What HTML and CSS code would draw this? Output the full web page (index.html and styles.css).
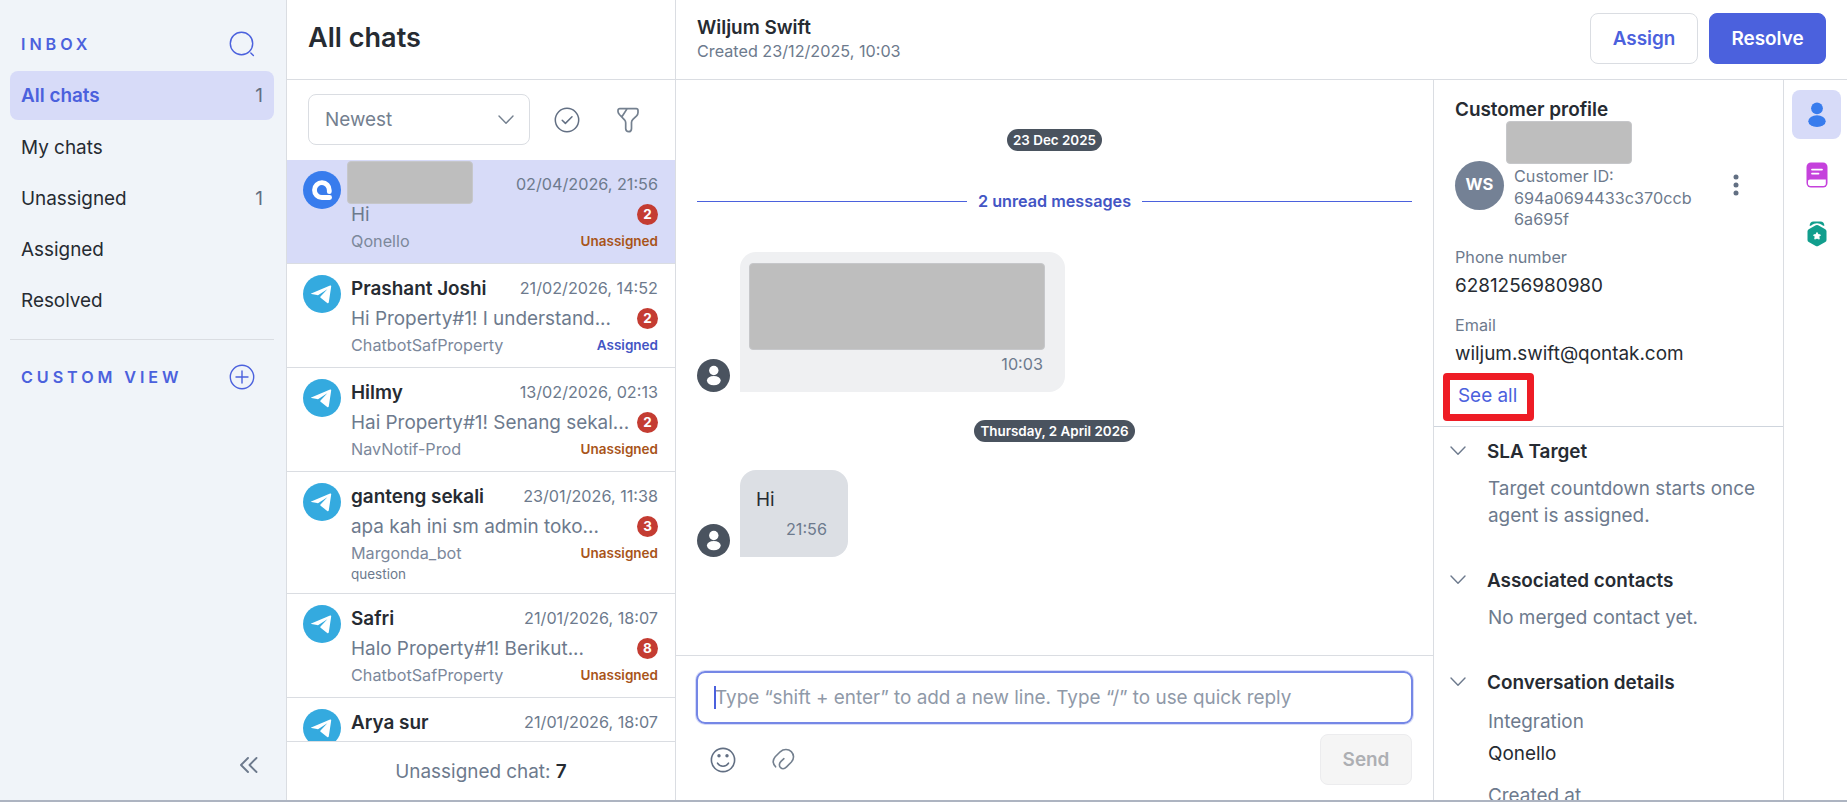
FILE: index.html
```html
<!DOCTYPE html>
<html lang="en">
<head>
    <meta charset="UTF-8">
    <meta name="viewport" content="width=device-width, initial-scale=1.0">
    <title>All chats</title>
    <link rel="stylesheet" href="styles.css">
</head>
<body>
    <!-- shared icons -->
    <svg width="0" height="0" class="sprite">
        <symbol id="telegram" viewBox="0 0 38 38">
            <circle cx="19" cy="19" r="19" fill="#34aadf"/>
            <path d="M8.2 18.6 27.1 10.6c.7-.3 1.2.1 1.1.9l-2.4 15.7c-.2 1-.9 1.2-1.6.7l-6.600-5.1c-.5-.4-.5-.9-.1-1.3l6.8-7.2-8.9 5.6c-.5.3-.9.3-1.4.2l-5.600-1.2c-.7-.2-.7-.1-.2-.3z" fill="#fff"/>
        </symbol>
        <symbol id="chevron" viewBox="0 0 16 10">
            <path d="M1 1l7 7.300 7-7.300" fill="none" stroke="currentColor" stroke-width="1.400" stroke-linecap="round" stroke-linejoin="round"/>
        </symbol>
        <symbol id="person" viewBox="0 0 33 33">
            <circle cx="16.500" cy="16.500" r="16.500" fill="#4a535f"/>
            <circle cx="16.800" cy="11.500" r="4.700" fill="#fff"/>
            <ellipse cx="16.800" cy="21.600" rx="6.900" ry="4.700" fill="#fff"/>
        </symbol>
    </svg>

    <div class="app">
        <aside class="sidebar">
            <div class="side-title">
                <span>INBOX</span>
                <svg width="26" height="26" viewBox="0 0 26 26" fill="none" stroke="#4b61dd" stroke-width="1.400" stroke-linecap="round"><circle cx="12.500" cy="12.500" r="11.200"/><path d="M21.800 22l2.600 2.600"/></svg>
            </div>
            <nav class="menu">
                <a class="menu-item active"><span>All chats</span><span class="count">1</span></a>
                <a class="menu-item"><span>My chats</span></a>
                <a class="menu-item"><span>Unassigned</span><span class="count">1</span></a>
                <a class="menu-item"><span>Assigned</span></a>
                <a class="menu-item"><span>Resolved</span></a>
            </nav>
            <div class="side-title custom">
                <span>CUSTOM VIEW</span>
                <svg width="26" height="26" viewBox="0 0 26 26" fill="none" stroke="#4b61dd" stroke-width="1.400" stroke-linecap="round"><circle cx="13" cy="13" r="11.700"/><path d="M13 7v12M7 13h12"/></svg>
            </div>
            <svg class="collapse" width="18" height="16" viewBox="0 0 18 16" fill="none" stroke="#6d7a8d" stroke-width="1.900" stroke-linecap="round" stroke-linejoin="round"><path d="M8 1L1 8l7 7M16.500 1l-7 7 7 7"/></svg>
        </aside>

        <section class="chats">
            <header class="chats-head">All chats</header>
            <div class="filters">
                <div class="select"><span>Newest</span><svg width="16" height="10"><use href="#chevron"/></svg></div>
                <svg class="check" width="26" height="26" viewBox="0 0 26 26" fill="none" stroke="#626f83" stroke-width="1.500" stroke-linecap="round" stroke-linejoin="round"><circle cx="13" cy="13" r="11.700"/><path d="M8.200 13.200l3.200 3.200 6.600-6.600"/></svg>
                <svg class="funnel" width="22" height="26" viewBox="0 0 22 26" fill="none" stroke="#74808f" stroke-width="1.700" stroke-linecap="round" stroke-linejoin="round"><path d="M2.800 1.700h16.400c1.100 0 1.800.7 1.800 1.700v2.200c0 1.300-.4 2.300-1.400 3.300l-3.700 3.500c-1.100 1-1.400 1.800-1.400 3.200v5.800c0 2.100-1.100 3.300-2.800 3.300s-3-1.200-3-3.300v-5.600c0-1.300-.3-2-1.200-3L2.400 7.500C1.500 6.500 1 5.700 1 4.600V3.400c0-1 .7-1.700 1.800-1.700zM10 1.900L4.900 9.700"/></svg>
            </div>
            <div class="chat-list">
                <article class="chat selected">
                    <svg class="logo" width="38" height="38" viewBox="0 0 38 38"><circle cx="19" cy="19" r="19" fill="#387ced"/><path d="M26.600 26.500H18.800a7.400 7.400 0 1 1 7.500-7.200v1.400" fill="none" stroke="#fff" stroke-width="4.800" stroke-linecap="round" stroke-linejoin="round"/></svg>
                    <div class="chat-body">
                        <div class="row top"><span></span><time>02/04/2026, 21:56</time></div>
                        <div class="row mid"><span class="text">Hi</span><span class="badge">2</span></div>
                        <div class="row low"><span>Qonello</span><b class="unassigned">Unassigned</b></div>
                    </div>
                    <i class="mask name-mask"></i>
                </article>
                <article class="chat">
                    <svg class="logo" width="38" height="38"><use href="#telegram"/></svg>
                    <div class="chat-body">
                        <div class="row top"><strong>Prashant Joshi</strong><time>21/02/2026, 14:52</time></div>
                        <div class="row mid"><span class="text">Hi Property#1! I understand...</span><span class="badge">2</span></div>
                        <div class="row low"><span>ChatbotSafProperty</span><b class="assigned">Assigned</b></div>
                    </div>
                </article>
                <article class="chat">
                    <svg class="logo" width="38" height="38"><use href="#telegram"/></svg>
                    <div class="chat-body">
                        <div class="row top"><strong>Hilmy</strong><time>13/02/2026, 02:13</time></div>
                        <div class="row mid"><span class="text">Hai Property#1! Senang sekal...</span><span class="badge">2</span></div>
                        <div class="row low"><span>NavNotif-Prod</span><b class="unassigned">Unassigned</b></div>
                    </div>
                </article>
                <article class="chat">
                    <svg class="logo" width="38" height="38"><use href="#telegram"/></svg>
                    <div class="chat-body">
                        <div class="row top"><strong>ganteng sekali</strong><time>23/01/2026, 11:38</time></div>
                        <div class="row mid"><span class="text">apa kah ini sm admin toko...</span><span class="badge">3</span></div>
                        <div class="row low"><span>Margonda_bot</span><b class="unassigned">Unassigned</b></div>
                        <div class="tag">question</div>
                    </div>
                </article>
                <article class="chat">
                    <svg class="logo" width="38" height="38"><use href="#telegram"/></svg>
                    <div class="chat-body">
                        <div class="row top"><strong>Safri</strong><time>21/01/2026, 18:07</time></div>
                        <div class="row mid"><span class="text">Halo Property#1! Berikut...</span><span class="badge">8</span></div>
                        <div class="row low"><span>ChatbotSafProperty</span><b class="unassigned">Unassigned</b></div>
                    </div>
                </article>
                <article class="chat">
                    <svg class="logo" width="38" height="38"><use href="#telegram"/></svg>
                    <div class="chat-body">
                        <div class="row top"><strong>Arya sur</strong><time>21/01/2026, 18:07</time></div>
                    </div>
                </article>
            </div>
            <footer class="chats-foot">Unassigned chat: <strong>7</strong></footer>
        </section>

        <main class="main">
            <header class="room-head">
                <div>
                    <div class="room-name">Wiljum Swift</div>
                    <div class="room-date">Created 23/12/2025, 10:03</div>
                </div>
                <div class="actions">
                    <button class="btn assign">Assign</button>
                    <button class="btn resolve">Resolve</button>
                </div>
            </header>
            <div class="content">
                <section class="room">
                    <div class="messages">
                        <div class="day">23 Dec 2025</div>
                        <div class="unread">2 unread messages</div>
                        <div class="message first">
                            <svg width="33" height="33"><use href="#person"/></svg>
                            <div class="bubble old">
                                <i class="mask text-mask"></i>
                                <time>10:03</time>
                            </div>
                        </div>
                        <div class="day">Thursday, 2 April 2026</div>
                        <div class="message">
                            <svg width="33" height="33"><use href="#person"/></svg>
                            <div class="bubble new">
                                <p>Hi</p>
                                <time>21:56</time>
                            </div>
                        </div>
                    </div>
                    <div class="composer">
                        <div class="input"><i class="caret"></i>Type “shift + enter” to add a new line. Type “/” to use quick reply</div>
                        <div class="tools">
                            <svg class="emoji" width="26" height="26" viewBox="0 0 26 26" fill="none" stroke="#626f83" stroke-width="1.600" stroke-linecap="round"><circle cx="13" cy="13" r="11.600"/><circle cx="9" cy="8.800" r="1.700" fill="#626f83" stroke="none"/><circle cx="17" cy="8.800" r="1.700" fill="#626f83" stroke="none"/><path d="M7.500 16.200c2.300 4 8.700 4 11 0"/></svg>
                            <svg class="clip" width="24" height="24" viewBox="0 0 24 24" fill="none" stroke="#74808f" stroke-width="1.600" stroke-linecap="round" stroke-linejoin="round"><path d="M4.600 18.800C2 16 1.500 12 4.200 8.700L9.200 3.800C12.500.8 17.500.9 20.300 3.600c3 3.100 2.900 7.400.1 10.400l-4.800 4.900c-2 2-4.400 2.300-6 .7-1.800-1.700-1.500-4.300.4-6.200l2.900-2.700"/></svg>
                            <button class="btn send">Send</button>
                        </div>
                    </div>
                </section>

                <aside class="profile">
                    <div class="customer">
                        <h3>Customer profile</h3>
                        <div class="identity">
                            <div class="avatar">WS</div>
                            <div class="customer-id">Customer ID: 694a0694433c370ccb<br>6a695f</div>
                            <svg class="dots" width="6" height="22" viewBox="0 0 6 22" fill="#626f83"><circle cx="3" cy="3" r="2.500"/><circle cx="3" cy="11" r="2.500"/><circle cx="3" cy="19" r="2.500"/></svg>
                            <i class="mask profile-mask"></i>
                        </div>
                        <div class="label">Phone number</div>
                        <div class="value">6281256980980</div>
                        <div class="label">Email</div>
                        <div class="value">wiljum.swift@qontak.com</div>
                        <a class="see-all">See all</a>
                    </div>
                    <div class="panel">
                        <h4><svg width="16" height="10"><use href="#chevron"/></svg>SLA Target</h4>
                        <p>Target countdown starts once agent is assigned.</p>
                    </div>
                    <div class="panel">
                        <h4><svg width="16" height="10"><use href="#chevron"/></svg>Associated contacts</h4>
                        <p>No merged contact yet.</p>
                    </div>
                    <div class="panel">
                        <h4><svg width="16" height="10"><use href="#chevron"/></svg>Conversation details</h4>
                        <p>Integration</p>
                        <p class="detail">Qonello</p>
                        <p>Created at</p>
                    </div>
                </aside>

                <nav class="rail">
                    <a class="rail-item active"><svg width="18" height="26" viewBox="0 0 18 26" fill="#387ced"><circle cx="9" cy="6.300" r="5.900"/><ellipse cx="9" cy="19.200" rx="8.700" ry="5.900"/></svg></a>
                    <a class="rail-item"><svg width="22" height="26" viewBox="0 0 22 26"><rect x=".5" y=".5" width="21" height="25" rx="4.500" fill="#c541dc"/><path d="M2 19.300c0-1.100.9-1.800 1.900-1.800h15.900v4.200c0 1.300-.9 2.200-2.200 2.200H4.300C3 23.900 2 23 2 21.700z" fill="#fff"/><path d="M6 7.600h10M6 11.600h6.500" stroke="#fff" stroke-width="1.800" stroke-linecap="round"/></svg></a>
                    <a class="rail-item"><svg width="20" height="26" viewBox="0 0 20 26"><path d="M2.600 4.800C2.900 1.800 4.200.6 6.500.6h7c2.300 0 3.600 1.200 3.900 4.200z" fill="#119e8d"/><path d="M3 6.300l1.800-2.200Q7 2.300 10 2.300t5.200 1.800L17 6.300z" fill="#fff"/><path d="M8.800 4.200q1.200-.6 2.400 0l7.100 4q1.200.8 1.200 2.100v8.600q0 1.300-1.200 2l-7.100 4q-1.200.7-2.400 0l-7.100-4q-1.200-.7-1.200-2v-8.600q0-1.300 1.200-2.100z" fill="#119e8d"/><path d="M10 11.500l1.200 2 2.300.5-1.600 1.700.3 2.400L10 17.100l-2.200 1 .3-2.400L6.500 14l2.300-.5z" fill="#fff" stroke="#fff" stroke-linejoin="round"/></svg></a>
                </nav>
            </div>
        </main>
    </div>
</body>
</html>
```
FILE: styles.css
```css
* {
    box-sizing: border-box;
}
body {
    margin: 0;
    font-family: Inter, "Liberation Sans", sans-serif;
    font-size: 18.9px;
    line-height: 27px;
    color: #262b32;
    background: #fff;
}
h3, h4, p {
    margin: 0;
    font-size: 18.9px;
}
svg {
    display: block;
    flex-shrink: 0;
}
strong, h3, h4 {
    font-weight: 600;
}
.sprite {
    position: absolute;
}
.app {
    display: flex;
    height: 802px;
    overflow: hidden;
    border-bottom: 2px solid #adb4c1;
}

/* sidebar */
.sidebar {
    width: 287px;
    flex-shrink: 0;
    display: flex;
    flex-direction: column;
    padding: 31px 12px 27px 10px;
    background: #f0f4f9;
    border-right: 1px solid #dadde2;
}
.side-title {
    display: flex;
    align-items: center;
    justify-content: space-between;
    height: 26px;
    padding: 0 19px 0 11px;
    font-size: 16.2px;
    font-weight: 600;
    letter-spacing: 3.9px;
    color: #4b61dd;
}
.menu {
    display: flex;
    flex-direction: column;
    gap: 2px;
    margin-top: 14px;
    padding-bottom: 14px;
    border-bottom: 1px solid #dadde2;
}
.menu-item {
    display: flex;
    align-items: center;
    justify-content: space-between;
    height: 49px;
    padding: 0 11px;
    border-radius: 8px;
}
.menu-item.active {
    margin-bottom: 1px;
    background: #d7dbf8;
    color: #4b61dd;
    font-weight: 600;
}
.count {
    color: #626f83;
    font-weight: 400;
}
.custom {
    margin-top: 24px;
}
.collapse {
    margin: auto 16px 0 auto;
}

/* chat list */
.chats {
    width: 389px;
    flex-shrink: 0;
    display: flex;
    flex-direction: column;
    border-right: 1px solid #dadde2;
}
.chats-head {
    height: 80px;
    padding: 24px 21px 0;
    font-size: 27.1px;
    font-weight: 600;
    border-bottom: 1px solid #dadde2;
}
.filters {
    display: flex;
    align-items: center;
    height: 80px;
    padding: 0 21px 1px;
    color: #74808f;
}
.select {
    display: flex;
    align-items: center;
    justify-content: space-between;
    width: 222px;
    height: 51px;
    padding: 0 15px 0 16px;
    border: 1px solid #dadde2;
    border-radius: 8px;
}
.check {
    margin-left: 24px;
}
.funnel {
    margin-left: 37px;
}
.chat-list {
    flex: 1;
    min-height: 0;
    overflow: hidden;
}
.chat {
    position: relative;
    display: flex;
    gap: 10px;
    min-height: 104px;
    padding: 10px 17px 9px 16px;
    border-bottom: 1px solid #dadde2;
}
.chat.selected {
    background: #d7dbf8;
}
.logo {
    margin-top: 1px;
}
.chat-body {
    flex: 1;
    color: #6d7a8d;
}
.chat-body strong {
    color: #262b32;
}
.row {
    display: flex;
    align-items: center;
    justify-content: space-between;
}
.top {
    height: 29px;
}
.mid {
    height: 30px;
}
.low {
    height: 25px;
    font-size: 16.2px;
    color: #7c889b;
}
time, .room-date, .label, .customer-id {
    font-size: 16.2px;
    color: #6d7a8d;
}
.badge {
    width: 21px;
    height: 21px;
    border-radius: 50%;
    background: #c43c32;
    color: #fff;
    font-size: 13.5px;
    font-weight: 700;
    line-height: 21px;
    text-align: center;
}
.low b {
    font-size: 13.5px;
    font-weight: 600;
}
.unassigned {
    color: #a8541a;
}
.assigned {
    color: #4355c4;
}
.tag {
    height: 18px;
    font-size: 13.5px;
    line-height: 17px;
}
.chats-foot {
    height: 59px;
    border-top: 1px solid #dadde2;
    line-height: 59px;
    text-align: center;
    color: #6d7a8d;
}
.chats-foot strong {
    color: #262b32;
}

/* areas blanked out for privacy */
.mask {
    display: block;
    background: #bebebe;
    border: 1px solid #c6c7ca;
    border-radius: 4px;
}
.name-mask {
    position: absolute;
    left: 60px;
    top: 1px;
    width: 126px;
    height: 43px;
}

/* room */
.main {
    flex: 1;
    display: flex;
    flex-direction: column;
}
.room-head {
    display: flex;
    justify-content: space-between;
    height: 80px;
    padding: 13px 21px 0;
    border-bottom: 1px solid #dadde2;
}
.room-name {
    font-weight: 600;
    line-height: 29px;
}
.room-date {
    line-height: 19px;
}
.actions {
    display: flex;
    gap: 11px;
}
.btn {
    height: 51px;
    padding: 0;
    border: 1px solid #dadde2;
    border-radius: 8px;
    background: #fff;
    font: 600 18.9px Inter, "Liberation Sans", sans-serif;
}
.assign {
    width: 108px;
    color: #4b61dd;
}
.resolve {
    width: 117px;
    border-color: #4b61dd;
    background: #4b61dd;
    color: #fff;
}
.content {
    flex: 1;
    min-height: 0;
    display: flex;
}
.room {
    flex: 1;
    display: flex;
    flex-direction: column;
}
.messages {
    flex: 1;
    padding: 49px 21px 0;
}
.day {
    width: fit-content;
    height: 22px;
    margin: 0 auto;
    padding: 0 6px;
    border-radius: 11px;
    background: #4a535f;
    color: #fff;
    font-size: 13.4px;
    font-weight: 600;
    line-height: 22px;
}
.unread {
    display: flex;
    align-items: center;
    gap: 11px;
    margin-top: 37px;
    color: #4355c4;
    font-size: 16.2px;
    font-weight: 600;
}
.unread::before, .unread::after {
    content: "";
    flex: 1;
    height: 1px;
    background: #4b61dd;
}
.message {
    display: flex;
    align-items: flex-end;
    gap: 10px;
    margin-top: 28px;
}
.message.first {
    margin: 37px 0 28px;
}
.bubble {
    border-radius: 16px 16px 16px 0;
    text-align: right;
}
.bubble time {
    display: block;
    line-height: 20px;
}
.old {
    width: 325px;
    height: 140px;
    padding: 11px 22px 0 9px;
    background: #eff0f2;
}
.text-mask {
    width: 296px;
    height: 87px;
    margin-bottom: 4px;
}
.new {
    width: 108px;
    height: 87px;
    padding: 16px 21px 0 16px;
    background: #dcdfe4;
}
.new p {
    text-align: left;
}
.new time {
    margin-top: 6px;
}

/* composer */
.composer {
    height: 145px;
    padding: 15px 20px 0;
    border-top: 1px solid #dadde2;
}
.input {
    position: relative;
    height: 53px;
    padding-left: 17px;
    border: 2px solid #7587e6;
    border-radius: 9px;
    box-shadow: 0 0 0 1px #d7dbf8;
    color: #8f99a8;
    line-height: 49px;
}
.caret {
    position: absolute;
    left: 16px;
    top: 13px;
    width: 2px;
    height: 23px;
    background: #4b61dd;
}
.tools {
    display: flex;
    align-items: center;
    margin-top: 10px;
    padding: 0 1px 0 14px;
}
.clip {
    margin-left: 35px;
}
.send {
    width: 92px;
    margin-left: auto;
    border-color: #ececee;
    background: #f5f5f5;
    color: #adafb3;
}

/* customer profile */
.profile {
    width: 350px;
    border-left: 1px solid #dadde2;
    overflow: hidden;
}
.customer {
    height: 347px;
    padding: 17px 21px 0;
    border-bottom: 1px solid #cfd5dd;
}
.customer h3 {
    line-height: 26px;
}
.identity {
    position: relative;
    display: flex;
    margin-bottom: 15px;
}
.avatar {
    width: 49px;
    height: 49px;
    margin-top: 38px;
    border-radius: 50%;
    background: #748195;
    color: #fff;
    font-size: 16.5px;
    font-weight: 700;
    line-height: 47px;
    text-align: center;
}
.customer-id {
    width: 195px;
    margin: 43px 0 0 10px;
    line-height: 21.6px;
}
.dots {
    margin: 51px 0 0 24px;
}
.profile-mask {
    position: absolute;
    left: 51px;
    top: -2px;
    width: 126px;
    height: 43px;
}
.label {
    line-height: 22px;
}
.value {
    margin: 4px 0 15px;
}
.see-all {
    display: inline-block;
    margin: -9px 0 0 -12px;
    padding: 2px 10px 5px 8px;
    border: 7px solid #ee1c25;
    border-radius: 4px;
    color: #4b61dd;
}
.panel {
    padding: 11px 10px 27px 54px;
}
.panel h4 {
    display: flex;
    align-items: center;
    gap: 21.500px;
    height: 26px;
    margin: 0 0 11px -38.500px;
}
.panel svg {
    color: #6d7a8d;
}
.panel p {
    color: #6d7a8d;
}
.panel:last-child h4 {
    margin-bottom: 13px;
}
.panel .detail {
    margin: 5px 0 15px;
    color: #262b32;
}

/* right rail */
.rail {
    width: 64px;
    padding: 10px 8px;
    border-left: 1px solid #dadde2;
}
.rail-item {
    display: flex;
    align-items: center;
    justify-content: center;
    width: 49px;
    height: 49px;
    margin-bottom: 10px;
    border-radius: 8px;
}
.rail-item.active {
    margin-bottom: 11px;
    background: #d7dbf8;
}
```
